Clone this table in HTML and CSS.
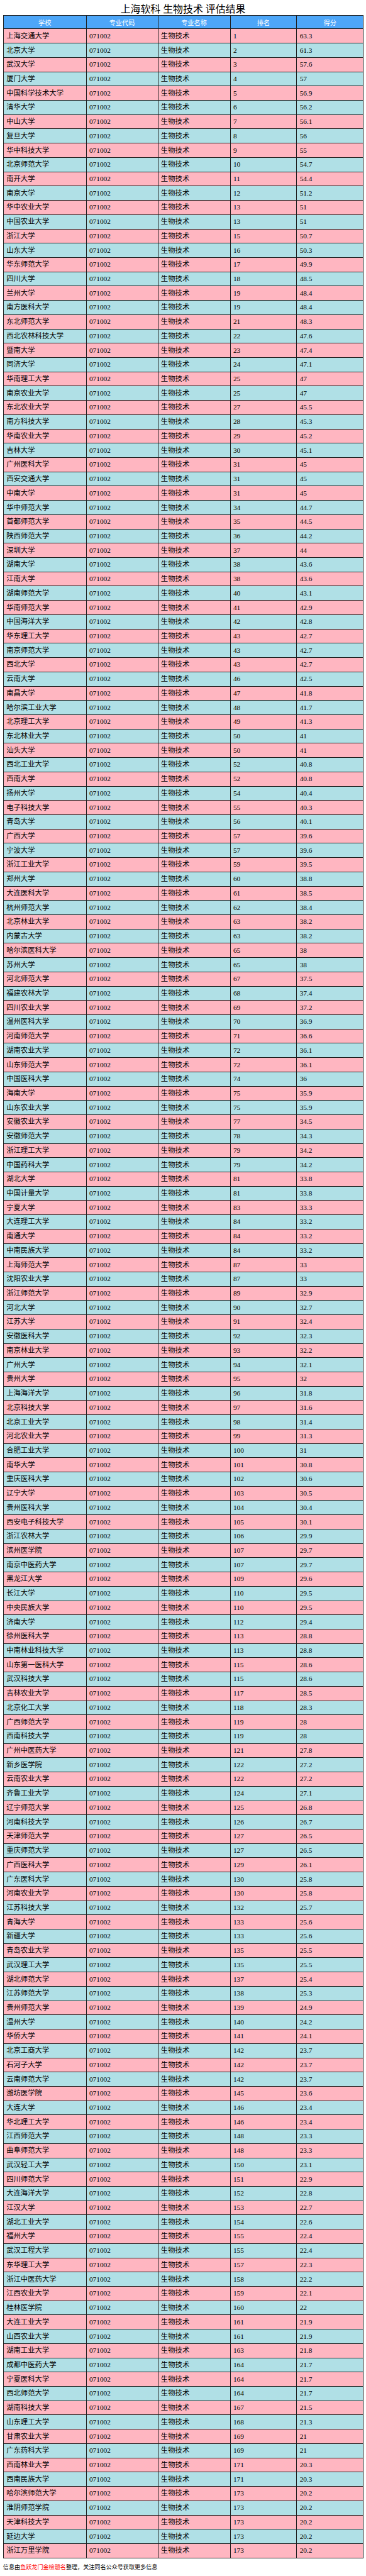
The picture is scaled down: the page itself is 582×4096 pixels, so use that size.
FILE: index.html
```html
<!DOCTYPE html>
<html lang="zh-CN">
<head>
<meta charset="utf-8">
<title>上海软科 生物技术 评估结果</title>
<link rel="stylesheet" href="styles.css">
</head>
<body>
<div class="page">
<h1 class="title">上海软科 生物技术 评估结果</h1>
<table class="rank">
<colgroup><col class="c1"><col class="c2"><col class="c3"><col class="c4"><col class="c5"></colgroup>
<thead><tr><th>学校</th><th>专业代码</th><th>专业名称</th><th>排名</th><th>得分</th></tr></thead>
<tbody>
<tr><td>上海交通大学</td><td>071002</td><td>生物技术</td><td>1</td><td>63.3</td></tr>
<tr><td>北京大学</td><td>071002</td><td>生物技术</td><td>2</td><td>61.3</td></tr>
<tr><td>武汉大学</td><td>071002</td><td>生物技术</td><td>3</td><td>57.6</td></tr>
<tr><td>厦门大学</td><td>071002</td><td>生物技术</td><td>4</td><td>57</td></tr>
<tr><td>中国科学技术大学</td><td>071002</td><td>生物技术</td><td>5</td><td>56.9</td></tr>
<tr><td>清华大学</td><td>071002</td><td>生物技术</td><td>6</td><td>56.2</td></tr>
<tr><td>中山大学</td><td>071002</td><td>生物技术</td><td>7</td><td>56.1</td></tr>
<tr><td>复旦大学</td><td>071002</td><td>生物技术</td><td>8</td><td>56</td></tr>
<tr><td>华中科技大学</td><td>071002</td><td>生物技术</td><td>9</td><td>55</td></tr>
<tr><td>北京师范大学</td><td>071002</td><td>生物技术</td><td>10</td><td>54.7</td></tr>
<tr><td>南开大学</td><td>071002</td><td>生物技术</td><td>11</td><td>54.4</td></tr>
<tr><td>南京大学</td><td>071002</td><td>生物技术</td><td>12</td><td>51.2</td></tr>
<tr><td>华中农业大学</td><td>071002</td><td>生物技术</td><td>13</td><td>51</td></tr>
<tr><td>中国农业大学</td><td>071002</td><td>生物技术</td><td>13</td><td>51</td></tr>
<tr><td>浙江大学</td><td>071002</td><td>生物技术</td><td>15</td><td>50.7</td></tr>
<tr><td>山东大学</td><td>071002</td><td>生物技术</td><td>16</td><td>50.3</td></tr>
<tr><td>华东师范大学</td><td>071002</td><td>生物技术</td><td>17</td><td>49.9</td></tr>
<tr><td>四川大学</td><td>071002</td><td>生物技术</td><td>18</td><td>48.5</td></tr>
<tr><td>兰州大学</td><td>071002</td><td>生物技术</td><td>19</td><td>48.4</td></tr>
<tr><td>南方医科大学</td><td>071002</td><td>生物技术</td><td>19</td><td>48.4</td></tr>
<tr><td>东北师范大学</td><td>071002</td><td>生物技术</td><td>21</td><td>48.3</td></tr>
<tr><td>西北农林科技大学</td><td>071002</td><td>生物技术</td><td>22</td><td>47.6</td></tr>
<tr><td>暨南大学</td><td>071002</td><td>生物技术</td><td>23</td><td>47.4</td></tr>
<tr><td>同济大学</td><td>071002</td><td>生物技术</td><td>24</td><td>47.1</td></tr>
<tr><td>华南理工大学</td><td>071002</td><td>生物技术</td><td>25</td><td>47</td></tr>
<tr><td>南京农业大学</td><td>071002</td><td>生物技术</td><td>25</td><td>47</td></tr>
<tr><td>东北农业大学</td><td>071002</td><td>生物技术</td><td>27</td><td>45.5</td></tr>
<tr><td>南方科技大学</td><td>071002</td><td>生物技术</td><td>28</td><td>45.3</td></tr>
<tr><td>华南农业大学</td><td>071002</td><td>生物技术</td><td>29</td><td>45.2</td></tr>
<tr><td>吉林大学</td><td>071002</td><td>生物技术</td><td>30</td><td>45.1</td></tr>
<tr><td>广州医科大学</td><td>071002</td><td>生物技术</td><td>31</td><td>45</td></tr>
<tr><td>西安交通大学</td><td>071002</td><td>生物技术</td><td>31</td><td>45</td></tr>
<tr><td>中南大学</td><td>071002</td><td>生物技术</td><td>31</td><td>45</td></tr>
<tr><td>华中师范大学</td><td>071002</td><td>生物技术</td><td>34</td><td>44.7</td></tr>
<tr><td>首都师范大学</td><td>071002</td><td>生物技术</td><td>35</td><td>44.5</td></tr>
<tr><td>陕西师范大学</td><td>071002</td><td>生物技术</td><td>36</td><td>44.2</td></tr>
<tr><td>深圳大学</td><td>071002</td><td>生物技术</td><td>37</td><td>44</td></tr>
<tr><td>湖南大学</td><td>071002</td><td>生物技术</td><td>38</td><td>43.6</td></tr>
<tr><td>江南大学</td><td>071002</td><td>生物技术</td><td>38</td><td>43.6</td></tr>
<tr><td>湖南师范大学</td><td>071002</td><td>生物技术</td><td>40</td><td>43.1</td></tr>
<tr><td>华南师范大学</td><td>071002</td><td>生物技术</td><td>41</td><td>42.9</td></tr>
<tr><td>中国海洋大学</td><td>071002</td><td>生物技术</td><td>42</td><td>42.8</td></tr>
<tr><td>华东理工大学</td><td>071002</td><td>生物技术</td><td>43</td><td>42.7</td></tr>
<tr><td>南京师范大学</td><td>071002</td><td>生物技术</td><td>43</td><td>42.7</td></tr>
<tr><td>西北大学</td><td>071002</td><td>生物技术</td><td>43</td><td>42.7</td></tr>
<tr><td>云南大学</td><td>071002</td><td>生物技术</td><td>46</td><td>42.5</td></tr>
<tr><td>南昌大学</td><td>071002</td><td>生物技术</td><td>47</td><td>41.8</td></tr>
<tr><td>哈尔滨工业大学</td><td>071002</td><td>生物技术</td><td>48</td><td>41.7</td></tr>
<tr><td>北京理工大学</td><td>071002</td><td>生物技术</td><td>49</td><td>41.3</td></tr>
<tr><td>东北林业大学</td><td>071002</td><td>生物技术</td><td>50</td><td>41</td></tr>
<tr><td>汕头大学</td><td>071002</td><td>生物技术</td><td>50</td><td>41</td></tr>
<tr><td>西北工业大学</td><td>071002</td><td>生物技术</td><td>52</td><td>40.8</td></tr>
<tr><td>西南大学</td><td>071002</td><td>生物技术</td><td>52</td><td>40.8</td></tr>
<tr><td>扬州大学</td><td>071002</td><td>生物技术</td><td>54</td><td>40.4</td></tr>
<tr><td>电子科技大学</td><td>071002</td><td>生物技术</td><td>55</td><td>40.3</td></tr>
<tr><td>青岛大学</td><td>071002</td><td>生物技术</td><td>56</td><td>40.1</td></tr>
<tr><td>广西大学</td><td>071002</td><td>生物技术</td><td>57</td><td>39.6</td></tr>
<tr><td>宁波大学</td><td>071002</td><td>生物技术</td><td>57</td><td>39.6</td></tr>
<tr><td>浙江工业大学</td><td>071002</td><td>生物技术</td><td>59</td><td>39.5</td></tr>
<tr><td>郑州大学</td><td>071002</td><td>生物技术</td><td>60</td><td>38.8</td></tr>
<tr><td>大连医科大学</td><td>071002</td><td>生物技术</td><td>61</td><td>38.5</td></tr>
<tr><td>杭州师范大学</td><td>071002</td><td>生物技术</td><td>62</td><td>38.4</td></tr>
<tr><td>北京林业大学</td><td>071002</td><td>生物技术</td><td>63</td><td>38.2</td></tr>
<tr><td>内蒙古大学</td><td>071002</td><td>生物技术</td><td>63</td><td>38.2</td></tr>
<tr><td>哈尔滨医科大学</td><td>071002</td><td>生物技术</td><td>65</td><td>38</td></tr>
<tr><td>苏州大学</td><td>071002</td><td>生物技术</td><td>65</td><td>38</td></tr>
<tr><td>河北师范大学</td><td>071002</td><td>生物技术</td><td>67</td><td>37.5</td></tr>
<tr><td>福建农林大学</td><td>071002</td><td>生物技术</td><td>68</td><td>37.4</td></tr>
<tr><td>四川农业大学</td><td>071002</td><td>生物技术</td><td>69</td><td>37.2</td></tr>
<tr><td>温州医科大学</td><td>071002</td><td>生物技术</td><td>70</td><td>36.9</td></tr>
<tr><td>河南师范大学</td><td>071002</td><td>生物技术</td><td>71</td><td>36.6</td></tr>
<tr><td>湖南农业大学</td><td>071002</td><td>生物技术</td><td>72</td><td>36.1</td></tr>
<tr><td>山东师范大学</td><td>071002</td><td>生物技术</td><td>72</td><td>36.1</td></tr>
<tr><td>中国医科大学</td><td>071002</td><td>生物技术</td><td>74</td><td>36</td></tr>
<tr><td>海南大学</td><td>071002</td><td>生物技术</td><td>75</td><td>35.9</td></tr>
<tr><td>山东农业大学</td><td>071002</td><td>生物技术</td><td>75</td><td>35.9</td></tr>
<tr><td>安徽农业大学</td><td>071002</td><td>生物技术</td><td>77</td><td>34.5</td></tr>
<tr><td>安徽师范大学</td><td>071002</td><td>生物技术</td><td>78</td><td>34.3</td></tr>
<tr><td>浙江理工大学</td><td>071002</td><td>生物技术</td><td>79</td><td>34.2</td></tr>
<tr><td>中国药科大学</td><td>071002</td><td>生物技术</td><td>79</td><td>34.2</td></tr>
<tr><td>湖北大学</td><td>071002</td><td>生物技术</td><td>81</td><td>33.8</td></tr>
<tr><td>中国计量大学</td><td>071002</td><td>生物技术</td><td>81</td><td>33.8</td></tr>
<tr><td>宁夏大学</td><td>071002</td><td>生物技术</td><td>83</td><td>33.3</td></tr>
<tr><td>大连理工大学</td><td>071002</td><td>生物技术</td><td>84</td><td>33.2</td></tr>
<tr><td>南通大学</td><td>071002</td><td>生物技术</td><td>84</td><td>33.2</td></tr>
<tr><td>中南民族大学</td><td>071002</td><td>生物技术</td><td>84</td><td>33.2</td></tr>
<tr><td>上海师范大学</td><td>071002</td><td>生物技术</td><td>87</td><td>33</td></tr>
<tr><td>沈阳农业大学</td><td>071002</td><td>生物技术</td><td>87</td><td>33</td></tr>
<tr><td>浙江师范大学</td><td>071002</td><td>生物技术</td><td>89</td><td>32.9</td></tr>
<tr><td>河北大学</td><td>071002</td><td>生物技术</td><td>90</td><td>32.7</td></tr>
<tr><td>江苏大学</td><td>071002</td><td>生物技术</td><td>91</td><td>32.4</td></tr>
<tr><td>安徽医科大学</td><td>071002</td><td>生物技术</td><td>92</td><td>32.3</td></tr>
<tr><td>南京林业大学</td><td>071002</td><td>生物技术</td><td>93</td><td>32.2</td></tr>
<tr><td>广州大学</td><td>071002</td><td>生物技术</td><td>94</td><td>32.1</td></tr>
<tr><td>贵州大学</td><td>071002</td><td>生物技术</td><td>95</td><td>32</td></tr>
<tr><td>上海海洋大学</td><td>071002</td><td>生物技术</td><td>96</td><td>31.8</td></tr>
<tr><td>北京科技大学</td><td>071002</td><td>生物技术</td><td>97</td><td>31.6</td></tr>
<tr><td>北京工业大学</td><td>071002</td><td>生物技术</td><td>98</td><td>31.4</td></tr>
<tr><td>河北农业大学</td><td>071002</td><td>生物技术</td><td>99</td><td>31.3</td></tr>
<tr><td>合肥工业大学</td><td>071002</td><td>生物技术</td><td>100</td><td>31</td></tr>
<tr><td>南华大学</td><td>071002</td><td>生物技术</td><td>101</td><td>30.8</td></tr>
<tr><td>重庆医科大学</td><td>071002</td><td>生物技术</td><td>102</td><td>30.6</td></tr>
<tr><td>辽宁大学</td><td>071002</td><td>生物技术</td><td>103</td><td>30.5</td></tr>
<tr><td>贵州医科大学</td><td>071002</td><td>生物技术</td><td>104</td><td>30.4</td></tr>
<tr><td>西安电子科技大学</td><td>071002</td><td>生物技术</td><td>105</td><td>30.1</td></tr>
<tr><td>浙江农林大学</td><td>071002</td><td>生物技术</td><td>106</td><td>29.9</td></tr>
<tr><td>滨州医学院</td><td>071002</td><td>生物技术</td><td>107</td><td>29.7</td></tr>
<tr><td>南京中医药大学</td><td>071002</td><td>生物技术</td><td>107</td><td>29.7</td></tr>
<tr><td>黑龙江大学</td><td>071002</td><td>生物技术</td><td>109</td><td>29.6</td></tr>
<tr><td>长江大学</td><td>071002</td><td>生物技术</td><td>110</td><td>29.5</td></tr>
<tr><td>中央民族大学</td><td>071002</td><td>生物技术</td><td>110</td><td>29.5</td></tr>
<tr><td>济南大学</td><td>071002</td><td>生物技术</td><td>112</td><td>29.4</td></tr>
<tr><td>徐州医科大学</td><td>071002</td><td>生物技术</td><td>113</td><td>28.8</td></tr>
<tr><td>中南林业科技大学</td><td>071002</td><td>生物技术</td><td>113</td><td>28.8</td></tr>
<tr><td>山东第一医科大学</td><td>071002</td><td>生物技术</td><td>115</td><td>28.6</td></tr>
<tr><td>武汉科技大学</td><td>071002</td><td>生物技术</td><td>115</td><td>28.6</td></tr>
<tr><td>吉林农业大学</td><td>071002</td><td>生物技术</td><td>117</td><td>28.5</td></tr>
<tr><td>北京化工大学</td><td>071002</td><td>生物技术</td><td>118</td><td>28.3</td></tr>
<tr><td>广西师范大学</td><td>071002</td><td>生物技术</td><td>119</td><td>28</td></tr>
<tr><td>西南科技大学</td><td>071002</td><td>生物技术</td><td>119</td><td>28</td></tr>
<tr><td>广州中医药大学</td><td>071002</td><td>生物技术</td><td>121</td><td>27.8</td></tr>
<tr><td>新乡医学院</td><td>071002</td><td>生物技术</td><td>122</td><td>27.2</td></tr>
<tr><td>云南农业大学</td><td>071002</td><td>生物技术</td><td>122</td><td>27.2</td></tr>
<tr><td>齐鲁工业大学</td><td>071002</td><td>生物技术</td><td>124</td><td>27.1</td></tr>
<tr><td>辽宁师范大学</td><td>071002</td><td>生物技术</td><td>125</td><td>26.8</td></tr>
<tr><td>河南科技大学</td><td>071002</td><td>生物技术</td><td>126</td><td>26.7</td></tr>
<tr><td>天津师范大学</td><td>071002</td><td>生物技术</td><td>127</td><td>26.5</td></tr>
<tr><td>重庆师范大学</td><td>071002</td><td>生物技术</td><td>127</td><td>26.5</td></tr>
<tr><td>广西医科大学</td><td>071002</td><td>生物技术</td><td>129</td><td>26.1</td></tr>
<tr><td>广东医科大学</td><td>071002</td><td>生物技术</td><td>130</td><td>25.8</td></tr>
<tr><td>河南农业大学</td><td>071002</td><td>生物技术</td><td>130</td><td>25.8</td></tr>
<tr><td>江苏科技大学</td><td>071002</td><td>生物技术</td><td>132</td><td>25.7</td></tr>
<tr><td>青海大学</td><td>071002</td><td>生物技术</td><td>133</td><td>25.6</td></tr>
<tr><td>新疆大学</td><td>071002</td><td>生物技术</td><td>133</td><td>25.6</td></tr>
<tr><td>青岛农业大学</td><td>071002</td><td>生物技术</td><td>135</td><td>25.5</td></tr>
<tr><td>武汉理工大学</td><td>071002</td><td>生物技术</td><td>135</td><td>25.5</td></tr>
<tr><td>湖北师范大学</td><td>071002</td><td>生物技术</td><td>137</td><td>25.4</td></tr>
<tr><td>江苏师范大学</td><td>071002</td><td>生物技术</td><td>138</td><td>25.3</td></tr>
<tr><td>贵州师范大学</td><td>071002</td><td>生物技术</td><td>139</td><td>24.9</td></tr>
<tr><td>温州大学</td><td>071002</td><td>生物技术</td><td>140</td><td>24.2</td></tr>
<tr><td>华侨大学</td><td>071002</td><td>生物技术</td><td>141</td><td>24.1</td></tr>
<tr><td>北京工商大学</td><td>071002</td><td>生物技术</td><td>142</td><td>23.7</td></tr>
<tr><td>石河子大学</td><td>071002</td><td>生物技术</td><td>142</td><td>23.7</td></tr>
<tr><td>云南师范大学</td><td>071002</td><td>生物技术</td><td>142</td><td>23.7</td></tr>
<tr><td>潍坊医学院</td><td>071002</td><td>生物技术</td><td>145</td><td>23.6</td></tr>
<tr><td>大连大学</td><td>071002</td><td>生物技术</td><td>146</td><td>23.4</td></tr>
<tr><td>华北理工大学</td><td>071002</td><td>生物技术</td><td>146</td><td>23.4</td></tr>
<tr><td>江西师范大学</td><td>071002</td><td>生物技术</td><td>148</td><td>23.3</td></tr>
<tr><td>曲阜师范大学</td><td>071002</td><td>生物技术</td><td>148</td><td>23.3</td></tr>
<tr><td>武汉轻工大学</td><td>071002</td><td>生物技术</td><td>150</td><td>23.1</td></tr>
<tr><td>四川师范大学</td><td>071002</td><td>生物技术</td><td>151</td><td>22.9</td></tr>
<tr><td>大连海洋大学</td><td>071002</td><td>生物技术</td><td>152</td><td>22.8</td></tr>
<tr><td>江汉大学</td><td>071002</td><td>生物技术</td><td>153</td><td>22.7</td></tr>
<tr><td>湖北工业大学</td><td>071002</td><td>生物技术</td><td>154</td><td>22.6</td></tr>
<tr><td>福州大学</td><td>071002</td><td>生物技术</td><td>155</td><td>22.4</td></tr>
<tr><td>武汉工程大学</td><td>071002</td><td>生物技术</td><td>155</td><td>22.4</td></tr>
<tr><td>东华理工大学</td><td>071002</td><td>生物技术</td><td>157</td><td>22.3</td></tr>
<tr><td>浙江中医药大学</td><td>071002</td><td>生物技术</td><td>158</td><td>22.2</td></tr>
<tr><td>江西农业大学</td><td>071002</td><td>生物技术</td><td>159</td><td>22.1</td></tr>
<tr><td>桂林医学院</td><td>071002</td><td>生物技术</td><td>160</td><td>22</td></tr>
<tr><td>大连工业大学</td><td>071002</td><td>生物技术</td><td>161</td><td>21.9</td></tr>
<tr><td>山西农业大学</td><td>071002</td><td>生物技术</td><td>161</td><td>21.9</td></tr>
<tr><td>湖南工业大学</td><td>071002</td><td>生物技术</td><td>163</td><td>21.8</td></tr>
<tr><td>成都中医药大学</td><td>071002</td><td>生物技术</td><td>164</td><td>21.7</td></tr>
<tr><td>宁夏医科大学</td><td>071002</td><td>生物技术</td><td>164</td><td>21.7</td></tr>
<tr><td>西北师范大学</td><td>071002</td><td>生物技术</td><td>164</td><td>21.7</td></tr>
<tr><td>湖南科技大学</td><td>071002</td><td>生物技术</td><td>167</td><td>21.5</td></tr>
<tr><td>山东理工大学</td><td>071002</td><td>生物技术</td><td>168</td><td>21.3</td></tr>
<tr><td>甘肃农业大学</td><td>071002</td><td>生物技术</td><td>169</td><td>21</td></tr>
<tr><td>广东药科大学</td><td>071002</td><td>生物技术</td><td>169</td><td>21</td></tr>
<tr><td>西南林业大学</td><td>071002</td><td>生物技术</td><td>171</td><td>20.3</td></tr>
<tr><td>西南民族大学</td><td>071002</td><td>生物技术</td><td>171</td><td>20.3</td></tr>
<tr><td>哈尔滨师范大学</td><td>071002</td><td>生物技术</td><td>173</td><td>20.2</td></tr>
<tr><td>淮阴师范学院</td><td>071002</td><td>生物技术</td><td>173</td><td>20.2</td></tr>
<tr><td>天津科技大学</td><td>071002</td><td>生物技术</td><td>173</td><td>20.2</td></tr>
<tr><td>延边大学</td><td>071002</td><td>生物技术</td><td>173</td><td>20.2</td></tr>
<tr><td>浙江万里学院</td><td>071002</td><td>生物技术</td><td>173</td><td>20.2</td></tr>
</tbody>
</table>
<p class="footer">信息由<span class="brand">鱼跃龙门金榜题名</span>整理，关注同名公众号获取更多信息</p>
</div>
</body>
</html>
```

FILE: styles.css
```css
html, body {
  margin: 0;
  padding: 0;
  background: #ffffff;
}

body {
  font-family: "Liberation Serif", "Noto Sans CJK SC", serif;
  color: #000000;
}

.page {
  padding: 0 4.83px;
}

.title {
  margin: 0;
  padding-top: 4.5px;
  height: 19.75px;
  line-height: 19.75px;
  font-size: 15.9px;
  font-weight: normal;
  text-align: center;
  color: #000000;
}

.rank {
  width: 572.3px;
  border-collapse: collapse;
  table-layout: fixed;
}

.rank .c1 { width: 131.75px; }
.rank .c2 { width: 113.96px; }
.rank .c3 { width: 115.09px; }
.rank .c4 { width: 105.77px; }
.rank .c5 { width: 105.73px; }

.rank th,
.rank td {
  border: 1px solid #1e1e1e;
  white-space: nowrap;
  overflow: hidden;
  vertical-align: middle;
}

.rank thead tr {
  height: 21.2px;
}

.rank th {
  background: #4da6f8;
  color: #ffffff;
  font-weight: normal;
  font-size: 10.2px;
  text-align: center;
  padding: 0;
}

.rank tbody tr {
  height: 22.73px;
}

.rank td {
  font-size: 11.36px;
  text-align: left;
  padding: 0 0 0 4.3px;
  line-height: 13px;
}

.rank tbody tr:nth-child(odd) td {
  background: #ffb6c1;
}

.rank tbody tr:nth-child(even) td {
  background: #b0e0e6;
}

.footer {
  margin: 8.5px 0 0 0;
  font-size: 9.1px;
  line-height: 12.5px;
}

.footer .brand {
  color: #ff0000;
}
```
